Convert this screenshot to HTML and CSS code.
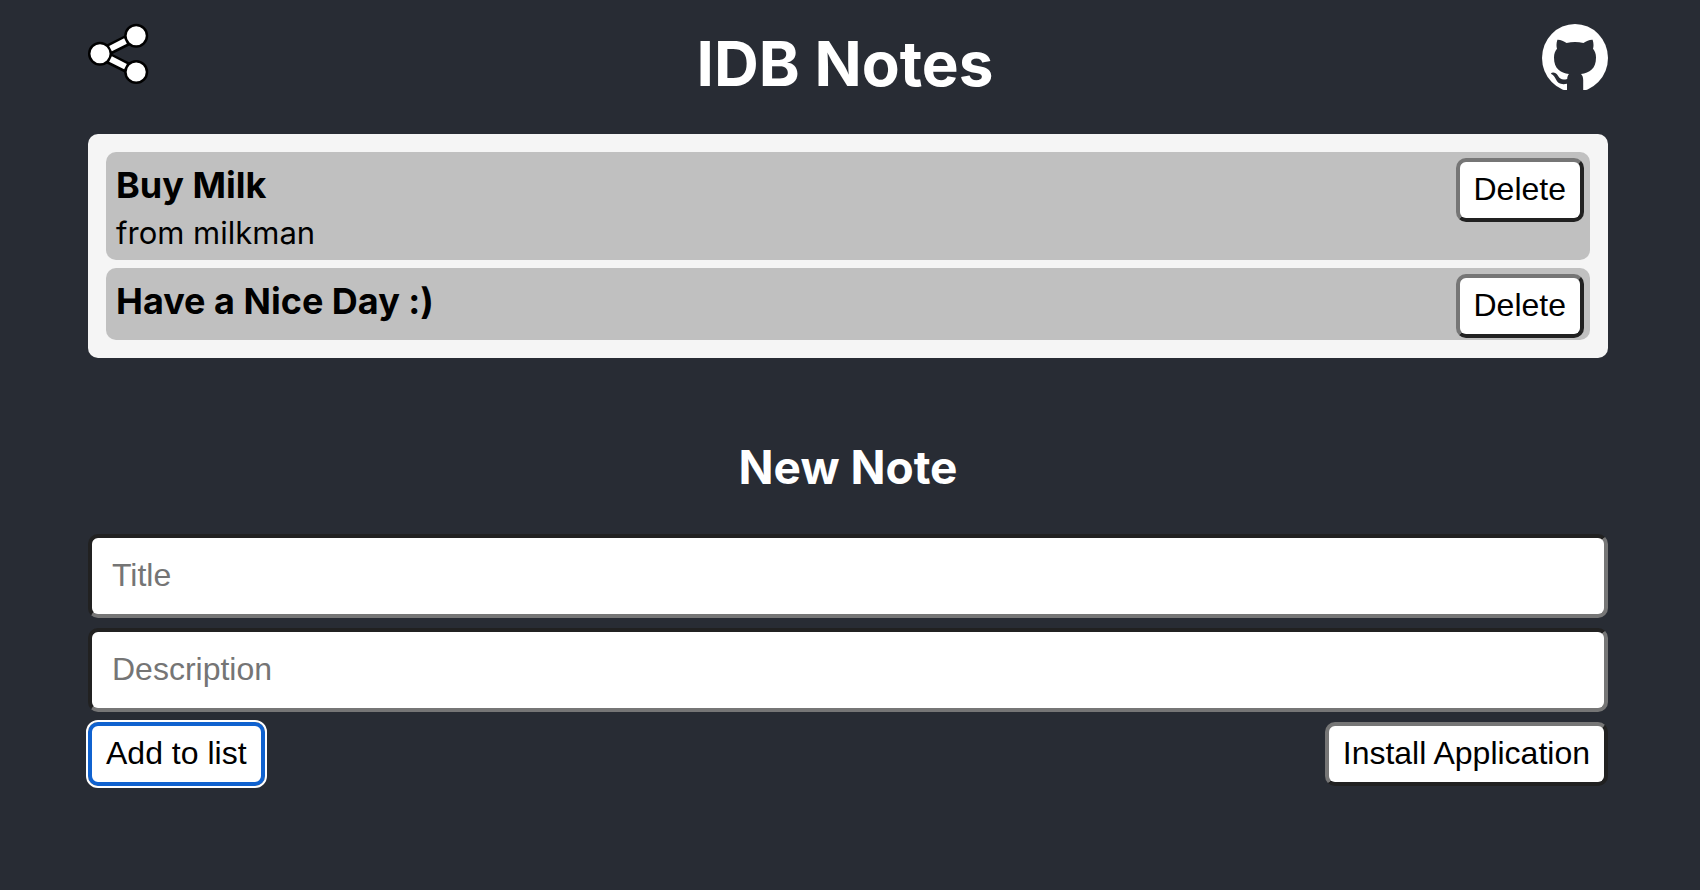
FILE: index.html
```
<!DOCTYPE html>
<html lang="en">
<head>
<meta charset="utf-8">
<meta name="viewport" content="width=device-width, initial-scale=1">
<title>IDB Notes</title>
<link rel="stylesheet" href="styles.css">
</head>
<body>
<div class="app">
  <header class="header">
    <button class="share" type="button" aria-label="Share">
      <svg viewBox="0 0 60 60" width="60" height="60" aria-hidden="true">
        <g stroke="#000" stroke-width="11"><path d="M12 30 48 12M12 30 48 48"/></g>
        <g fill="#fff" stroke="#000" stroke-width="2.5"><circle cx="12" cy="29.8" r="10.8"/><circle cx="48.2" cy="11.8" r="10.8"/><circle cx="48.2" cy="48" r="10.8"/></g>
        <path d="M22.5 24.6 37.5 17M22.5 35 37.5 42.6" stroke="#fff" stroke-width="6"/>
      </svg>
    </button>
    <h1 class="title">IDB Notes</h1>
    <a class="github" href="#" aria-label="GitHub">
      <svg class="github-mark" viewBox="0 0 66 66" width="66" height="66" aria-hidden="true">
        <ellipse cx="33" cy="34" rx="33" ry="34" fill="#fff"/>
        <path fill="#282c34" d="M25 67V59.800C18.500 61 15.800 59 14 55.500C12.500 52.500 11.500 51 8.800 49.700C10.300 47.600 14 48.500 16 51.800C18 55.200 20.500 56.300 25.200 55C25.300 52.800 25.800 51.300 27 50C18.500 48.800 12 45 12 33.500C12 29.800 13.200 27 15 24.800C14.300 22.500 14.200 19 15.400 15.700C18.500 15.500 21.500 17 24.600 19C30 17.800 36 17.800 41.400 19C44.500 17 47.500 15.500 50.600 15.700C51.800 19 51.700 22.500 51 24.800C52.800 27 54 29.800 54 33.500C54 45 47.500 48.800 39 50C40.500 51.300 41.200 53.500 41.200 56V67Z"/>
      </svg>
    </a>
  </header>
  <main>
    <ul class="notes">
      <li class="note">
        <div class="note-body">
          <h3 class="note-title">Buy Milk</h3>
          <p class="note-text">from milkman</p>
        </div>
        <button class="button" type="button">Delete</button>
      </li>
      <li class="note">
        <div class="note-body">
          <h3 class="note-title">Have a Nice Day :)</h3>
        </div>
        <button class="button" type="button">Delete</button>
      </li>
    </ul>
    <h2 class="subtitle">New Note</h2>
    <form class="form">
      <input class="field" type="text" placeholder="Title" aria-label="Title">
      <input class="field" type="text" placeholder="Description" aria-label="Description">
      <div class="actions">
        <button class="button button-focused" type="button">Add to list</button>
        <button class="button" type="button">Install Application</button>
      </div>
    </form>
  </main>
</div>
</body>
</html>
```
FILE: styles.css
```
* {
  box-sizing: border-box;
}

body {
  margin: 0;
  min-height: 100vh;
  background: #282c34;
  font-family: Inter, "Liberation Sans", sans-serif;
}

.app {
  padding: 24px 92px 40px 88px;
}

.header {
  display: flex;
  justify-content: space-between;
  align-items: flex-start;
  height: 110px;
}

.share {
  padding: 0;
  border: 0;
  background: none;
}

.share svg,
.github-mark {
  display: block;
}

.share svg {
  overflow: visible;
}

.title {
  margin: 0;
  color: #fff;
  font-size: 62px;
  line-height: 80px;
}

.notes {
  display: flex;
  flex-direction: column;
  gap: 8px;
  margin: 0;
  padding: 18px;
  list-style: none;
  background: #f5f5f5;
  border-radius: 10px;
}

.note {
  display: flex;
  justify-content: space-between;
  align-items: flex-start;
  padding: 6px 6px 0 10px;
  background: #c0c0c0;
  border-radius: 10px;
}

.note-body {
  padding: 3px 0 15px;
}

.note-title {
  margin: 0;
  font-size: 36px;
  line-height: 48px;
}

.note-text {
  margin: 3px 0 -9px;
  font-size: 31px;
  line-height: 42px;
}

.subtitle {
  margin: 79px 0 37px;
  color: #fff;
  font-size: 46px;
  line-height: 60px;
  text-align: center;
}

.form {
  display: flex;
  flex-direction: column;
  gap: 10px;
}

.field {
  width: 100%;
  height: 84px;
  padding: 0 20px 2px;
  border: 4px solid;
  border-color: #212121 #767676 #767676 #212121;
  border-radius: 10px;
  background: #fff;
  font: 32px "Liberation Sans", Arial, sans-serif;
}

.field::placeholder {
  color: #757575;
}

.actions {
  display: flex;
  justify-content: space-between;
}

.button {
  height: 64px;
  padding: 0 14px 2px;
  border: 4px solid;
  border-color: #767676 #212121 #212121 #767676;
  border-radius: 10px;
  background: #fff;
  color: #000;
  font: 32px "Liberation Sans", Arial, sans-serif;
}

.button-focused {
  border-color: #1062cf;
  outline: 2px solid #fff;
}
```
